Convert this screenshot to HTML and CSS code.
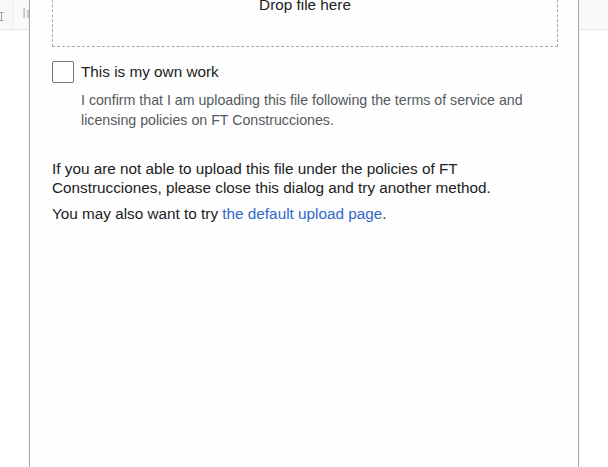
FILE: index.html
```html
<!DOCTYPE html>
<html lang="en">
<head>
<meta charset="utf-8">
<title>Upload file</title>
<link rel="stylesheet" href="styles.css">
</head>
<body>
<div class="page">
  <div class="toolbar">
    <div class="tool tool-style">
      <svg class="tool-icon" width="6" height="10" viewBox="0 0 6 10" aria-hidden="true">
        <path d="M-1 0.5H3.5M1.5 0.5V8.5M-1 8.5H3.5" stroke="#9a9ea3" stroke-width="1" fill="none"/>
      </svg>
    </div>
    <div class="tool tool-insert">Insert</div>
  </div>

  <div class="dialog">
    <div class="dialog-body">
      <div class="dropzone">Drop file here</div>

      <div class="field">
        <div class="check-row">
          <span class="checkbox"></span>
          <span class="check-label">This is my own work</span>
        </div>
        <div class="help">I confirm that I am uploading this file following the terms of service and licensing policies on FT Construcciones.</div>
      </div>

      <p class="note">If you are not able to upload this file under the policies of FT Construcciones, please close this dialog and try another method.</p>
      <p class="note">You may also want to try <a class="link" href="#">the default upload page</a>.</p>
    </div>
  </div>
</div>
</body>
</html>
```

FILE: styles.css
```css
html, body {
  margin: 0;
  padding: 0;
  background: #ffffff;
}

body {
  font-family: "Liberation Sans", Arial, sans-serif;
  font-size: 15.3px;
  color: #202122;
  overflow: hidden;
}

.page {
  position: relative;
  width: 608px;
  height: 467px;
  overflow: hidden;
  background: #ffffff;
}

.toolbar {
  display: flex;
  height: 29px;
  background: #f8f9fa;
  border-bottom: 1px solid #e4e6e9;
}

.tool {
  display: flex;
  align-items: flex-start;
}

.tool-style {
  width: 12px;
  border-right: 1px solid #ebedf0;
}

.tool-icon {
  margin-top: 12px;
}

.tool-insert {
  padding-left: 9px;
  padding-top: 5px;
  font-size: 15px;
  line-height: 15px;
  color: #b8bcc0;
}

.dialog {
  position: absolute;
  left: 29px;
  top: 0;
  width: 548px;
  height: 100%;
  background: #fefefe;
  border-left: 1px solid #a2a9b1;
  border-right: 1px solid #a2a9b1;
  box-shadow: 0 0 1px rgba(0, 0, 0, 0.15);
}

.dialog-body {
  padding: 0 20px 0 22px;
}

.dropzone {
  margin-top: -40px;
  padding: 34px 0 31px;
  border: 1px dashed #a2a9b1;
  text-align: center;
  line-height: 20px;
  color: #202122;
}

.field {
  margin-top: 14px;
}

.check-row {
  display: flex;
  align-items: flex-start;
  gap: 7px;
}

.checkbox {
  flex: none;
  width: 20px;
  height: 20px;
  border: 1px solid #72777d;
  border-radius: 2px;
  background: #ffffff;
}

.check-label {
  padding-top: 1px;
  line-height: 20px;
}

.help {
  margin: 7px 0 0 29px;
  font-size: 14.2px;
  line-height: 20px;
  color: #54595d;
}

.note {
  margin: 7px 0 0;
  line-height: 19px;
}

.field + .note {
  margin-top: 29px;
}

.link {
  color: #3366cc;
  text-decoration: none;
}
```
